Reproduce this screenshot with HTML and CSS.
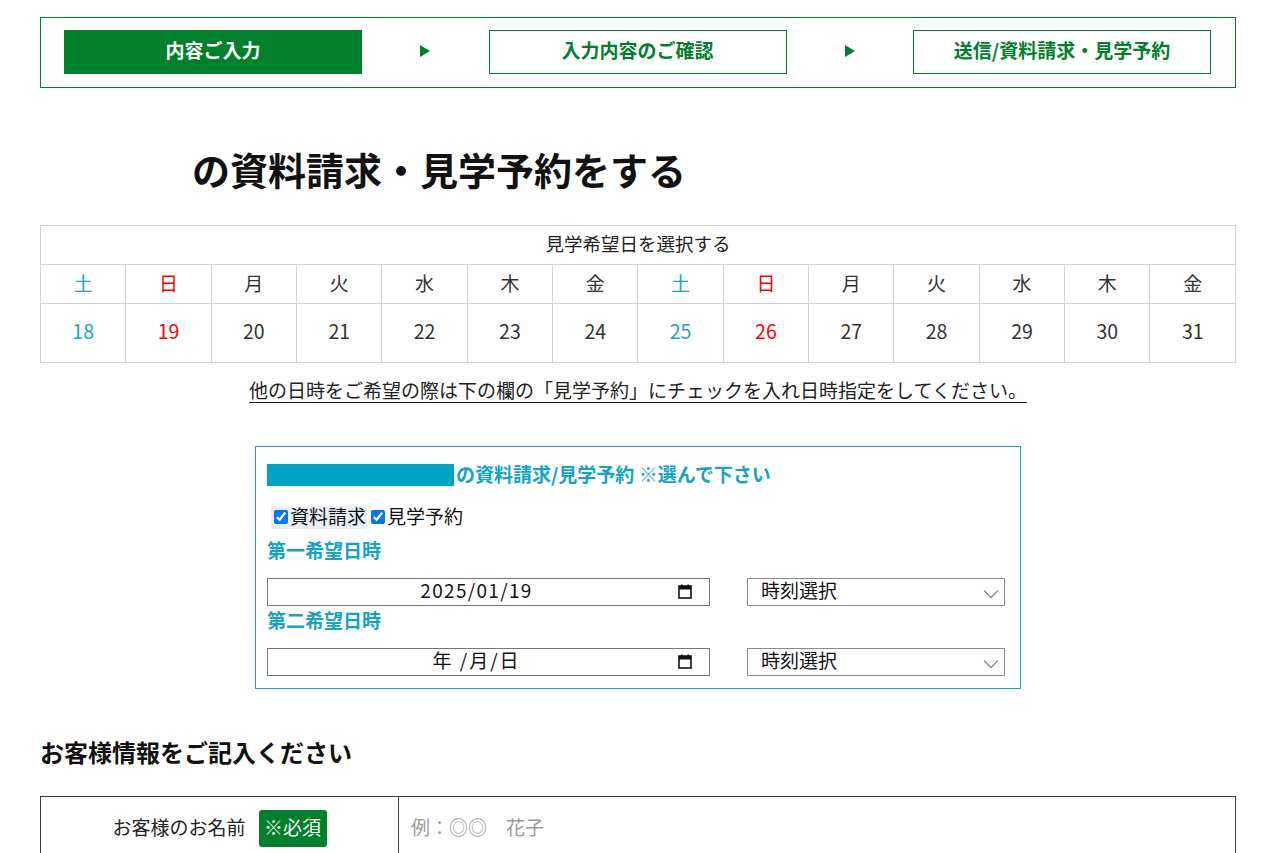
FILE: index.html
```html
<!DOCTYPE html>
<html lang="ja">
<head>
<meta charset="utf-8">
<title>資料請求・見学予約</title>
<link rel="stylesheet" href="styles.css">
</head>
<body>
<div class="page">
  <nav class="steps">
    <div class="step step-active"><span class="step-text">内容ご入力</span></div>
    <div class="arrow-wrap"><span class="arrow"></span></div>
    <div class="step"><span class="step-text">入力内容のご確認</span></div>
    <div class="arrow-wrap"><span class="arrow"></span></div>
    <div class="step"><span class="step-text">送信/資料請求・見学予約</span></div>
  </nav>

  <h1 class="title">の資料請求・見学予約をする</h1>

  <table class="cal">
    <tr class="cal-head"><td colspan="14">見学希望日を選択する</td></tr>
    <tr class="cal-days">
      <td class="sat">土</td><td class="sun">日</td><td>月</td><td>火</td><td>水</td><td>木</td><td>金</td>
      <td class="sat">土</td><td class="sun">日</td><td>月</td><td>火</td><td>水</td><td>木</td><td>金</td>
    </tr>
    <tr class="cal-dates">
      <td class="sat">18</td><td class="sun">19</td><td>20</td><td>21</td><td>22</td><td>23</td><td>24</td>
      <td class="sat">25</td><td class="sun">26</td><td>27</td><td>28</td><td>29</td><td>30</td><td>31</td>
    </tr>
  </table>

  <p class="note"><span class="note-u">他の日時をご希望の際は下の欄の「見学予約」にチェックを入れ日時指定をしてください。</span></p>

  <div class="req-box">
    <div class="req-title"><span class="req-name"></span><span class="req-title-text">の資料請求/見学予約 ※選んで下さい</span></div>
    <div class="req-checks">
      <label class="chk chk-focus"><input type="checkbox" checked><span class="chk-text">資料請求</span></label>
      <label class="chk"><input type="checkbox" checked><span class="chk-text">見学予約</span></label>
    </div>
    <div class="req-label">第一希望日時</div>
    <div class="req-row">
      <div class="date-box"><span class="date-text">2025/01/19</span><svg class="cal-ico" width="14" height="15" viewBox="0 0 14 15"><rect x="1" y="2" width="12" height="12" fill="none" stroke="#111" stroke-width="1.6"/><rect x="1" y="2" width="12" height="3.5" fill="#111"/><rect x="3" y="0.5" width="1.6" height="2" fill="#111"/><rect x="9.4" y="0.5" width="1.6" height="2" fill="#111"/></svg></div>
      <div class="sel-box"><span class="sel-text">時刻選択</span><svg class="chev" width="16" height="10" viewBox="0 0 16 10"><path d="M1 1.5 L8 8.5 L15 1.5" fill="none" stroke="#8a8a8a" stroke-width="1.3"/></svg></div>
    </div>
    <div class="req-label req-label2">第二希望日時</div>
    <div class="req-row">
      <div class="date-box"><span class="date-text date-ph">年 /月/日</span><svg class="cal-ico" width="14" height="15" viewBox="0 0 14 15"><rect x="1" y="2" width="12" height="12" fill="none" stroke="#111" stroke-width="1.6"/><rect x="1" y="2" width="12" height="3.5" fill="#111"/><rect x="3" y="0.5" width="1.6" height="2" fill="#111"/><rect x="9.4" y="0.5" width="1.6" height="2" fill="#111"/></svg></div>
      <div class="sel-box"><span class="sel-text">時刻選択</span><svg class="chev" width="16" height="10" viewBox="0 0 16 10"><path d="M1 1.5 L8 8.5 L15 1.5" fill="none" stroke="#8a8a8a" stroke-width="1.3"/></svg></div>
    </div>
  </div>

  <h2 class="sec">お客様情報をご記入ください</h2>

  <table class="info">
    <tr>
      <th><div class="info-th"><span class="info-label">お客様のお名前</span><span class="badge">※必須</span></div></th>
      <td><input class="info-input" type="text" placeholder="例：◎◎　花子"></td>
    </tr>
  </table>
</div>
</body>
</html>
```

FILE: styles.css
```css
* { box-sizing: border-box; }
html, body { margin: 0; padding: 0; background: #fff; }
body {
  font-family: "Noto Sans CJK JP", "Noto Sans", sans-serif;
  color: #222;
  font-size: 19px;
}
.page {
  width: 1196px;
  margin-left: 40px;
  padding-top: 17px;
}

/* Steps */
.steps {
  height: 71px;
  border: 1px solid #00802a;
  display: flex;
  align-items: center;
  padding: 0 24px 2px 23px;
}
.step {
  width: 298px;
  height: 44px;
  border: 1px solid #00802a;
  display: flex;
  align-items: center;
  justify-content: center;
  font-weight: bold;
  font-size: 19px;
  color: #00802a;
  line-height: 1;
}
.step-text { padding-bottom: 5px; }
.step-active {
  background: #00802a;
  color: #fff;
}
.arrow-wrap {
  flex: 1;
  display: flex;
  justify-content: center;
}
.arrow {
  width: 0;
  height: 0;
  margin-bottom: 2px;
  border-top: 6px solid transparent;
  border-bottom: 6px solid transparent;
  border-left: 10px solid #00802a;
}

/* Title */
.title {
  margin: 56px 0 0 0;
  padding-left: 152px;
  font-size: 38px;
  line-height: 50px;
  font-weight: bold;
  color: #111;
  padding-bottom: 3px;
}

/* Calendar */
.cal {
  margin-top: 28px;
  width: 1196px;
  border-collapse: collapse;
  table-layout: fixed;
}
.cal td {
  border: 1px solid #d2d2d2;
  text-align: center;
  padding: 0 0 4px 0;
  color: #333;
  font-size: 19px;
  line-height: 1;
}
.cal-head td { height: 39px; color: #222; font-size: 18.5px; }
.cal-days td { height: 39px; }
.cal-dates td { height: 59px; font-size: 19.5px; }
.cal .sat { color: #1ba2c6; }
.cal .sun { color: #ff0000; }

/* Note */
.note {
  margin: 13px 0 0 0;
  text-align: center;
  line-height: 28px;
  font-size: 19px;
  color: #222;
}
.note-u { text-decoration: underline; text-underline-offset: 4px; }

/* Request box */
.req-box {
  width: 766px;
  margin: 42px auto 0;
  border: 1px solid #16a6c6;
  padding: 15px 14px 12px 11px;
}
.req-title {
  display: flex;
  align-items: center;
  height: 26px;
  font-weight: bold;
  font-size: 19px;
  color: #14a3c3;
}
.req-title-text { padding-bottom: 4px; }
.req-name {
  display: inline-block;
  width: 187px;
  height: 22px;
  background: #00a3c3;
  margin-right: 2px;
}
.req-checks {
  margin-top: 16px;
  display: flex;
  align-items: center;
  height: 26px;
  font-size: 19px;
  color: #111;
}
.chk {
  display: flex;
  align-items: center;
  height: 23px;
  padding-right: 1px;
  margin-right: 2px;
}
.chk-text { padding-bottom: 3px; }
.chk input { margin: 0 2px 0 2px; width: 14px; height: 14px; }
.chk-focus {
  background: #e9eef7;
  border-radius: 2px;
  margin-left: 4px;
}
.chk-focus input { margin-left: 3px; }
.req-label {
  margin-top: 7px;
  height: 26px;
  line-height: 26px;
  font-weight: bold;
  font-size: 19px;
  color: #14a3c3;
}
.req-label2 { margin-top: 1px; }
.req-row {
  margin-top: 15px;
  display: flex;
  gap: 37px;
}
.req-label2 + .req-row { margin-top: 15px; }
.date-box {
  width: 443px;
  height: 28px;
  border: 1px solid #767676;
  position: relative;
  display: flex;
  align-items: center;
  justify-content: center;
  padding-right: 24px;
  font-size: 19px;
  color: #111;
}
.date-text { line-height: 1; padding-bottom: 5px; letter-spacing: 1.3px; }
.date-ph { letter-spacing: 2px; }
.cal-ico {
  position: absolute;
  right: 17px;
  top: 5px;
}
.sel-box {
  width: 258px;
  height: 28px;
  border: 1px solid #8a8a8a;
  display: flex;
  align-items: center;
  justify-content: space-between;
  padding: 0 5px 0 13px;
  font-size: 19px;
  color: #111;
  line-height: 1;
}
.sel-text { padding-bottom: 5px; }
.chev { margin-top: 3px; }

/* Section heading */
.sec {
  margin: 47px 0 0 0;
  font-size: 24px;
  line-height: 32px;
  font-weight: bold;
  color: #111;
}

/* Info table */
.info {
  margin-top: 28px;
  width: 1196px;
  border-collapse: collapse;
  table-layout: fixed;
}
.info th, .info td {
  border: 1px solid #4a3b36;
  height: 63px;
  padding: 0;
}
.info th {
  width: 358px;
  font-weight: normal;
  font-size: 19px;
  color: #222;
}
.info-th {
  display: flex;
  align-items: center;
  justify-content: center;
  gap: 13px;
}
.info-label { padding-bottom: 3px; }
.badge {
  display: flex;
  align-items: center;
  justify-content: center;
  width: 68px;
  height: 37px;
  padding-bottom: 3px;
  background: #00802a;
  color: #fff;
  border-radius: 3px;
  font-size: 19px;
}
.info-input {
  border: none;
  outline: none;
  width: 100%;
  padding: 0 12px 4px;
  font-family: inherit;
  font-size: 19px;
  color: #222;
  background: transparent;
}
.info-input::placeholder { color: #9a9a9a; }
```
